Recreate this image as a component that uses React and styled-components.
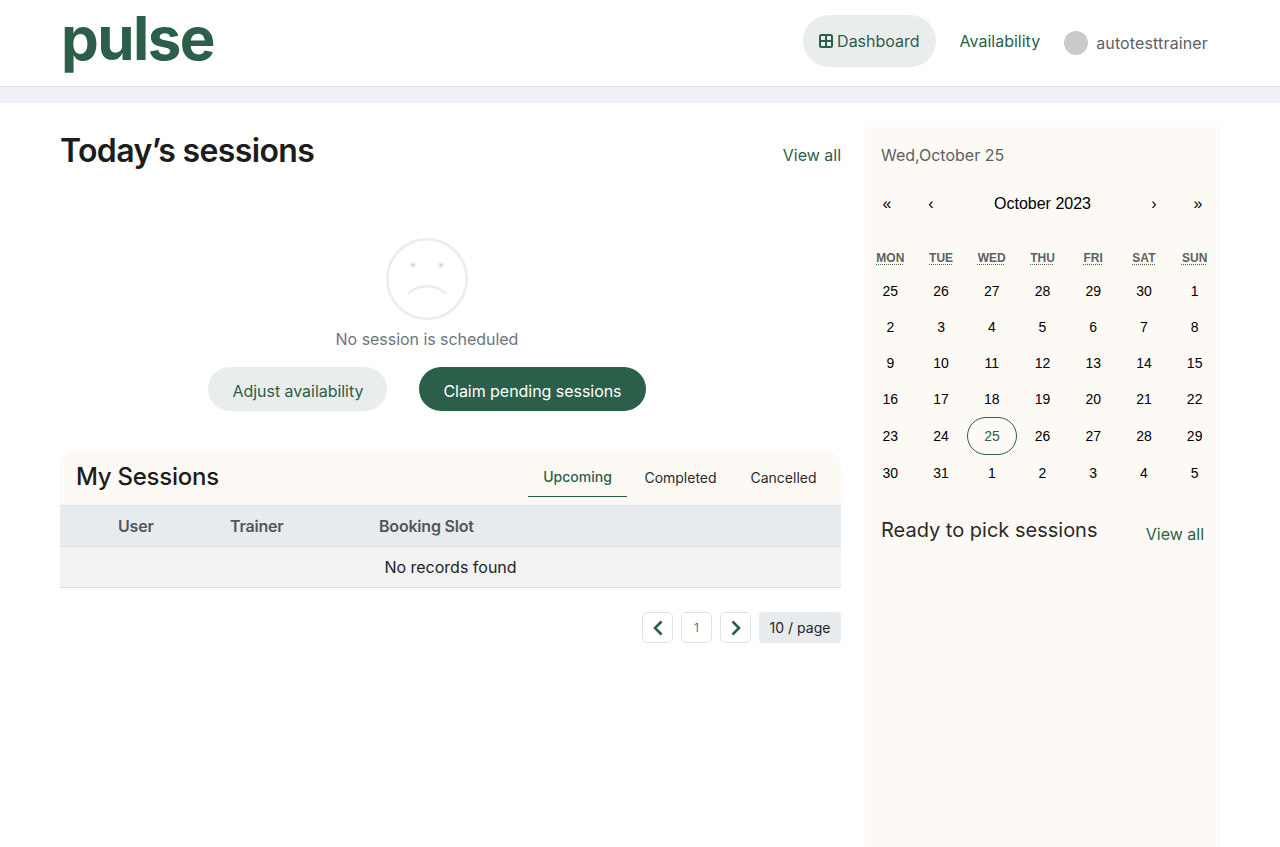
import React from 'react';
import styled, { createGlobalStyle } from 'styled-components';

const GREEN = '#2b5f4a';
const CREAM = '#fdfaf6';

const GlobalStyle = createGlobalStyle`
  html, body {
    margin: 0;
    padding: 0;
    background: #fff;
    font-family: Inter, "Liberation Sans", sans-serif;
  }
  * {
    box-sizing: border-box;
  }
`;

const Page = styled.div`
  width: 1280px;
  height: 847px;
  overflow: hidden;
`;

const Header = styled.header`
  height: 87px;
  border-bottom: 1px solid #dee0e6;
  display: flex;
  align-items: center;
  justify-content: space-between;
  padding: 0 72px 0 61px;
`;

const Logo = styled.span`
  font-family: Inter, sans-serif;
  font-weight: 700;
  font-size: 60px;
  line-height: 86px;
  letter-spacing: -1.6px;
  color: ${GREEN};
  margin-top: -10px;
`;

const Nav = styled.nav`
  display: flex;
  align-items: center;
`;

const NavLink = styled.a`
  display: flex;
  align-items: center;
  gap: 4px;
  height: 52px;
  margin-top: -5px;
  margin-right: 8px;
  padding: 0 16px;
  border-radius: 26px;
  font-size: 16px;
  color: ${GREEN};
  background: ${(p) => (p.$active ? '#e9eeec' : 'transparent')};
`;

const UserBox = styled.div`
  display: flex;
  align-items: center;
  gap: 8px;
  font-size: 16px;
  letter-spacing: 0.14px;
  color: #5f5f5f;
`;

const Avatar = styled.span`
  width: 24px;
  height: 24px;
  border-radius: 50%;
  background: #cbcbcb;
`;

const Band = styled.div`
  height: 16px;
  background: #f0f1f5;
`;

const Main = styled.main`
  display: flex;
  gap: 24px;
  padding: 24px 60px 0;
`;

const Left = styled.section`
  width: 781px;
`;

const TitleRow = styled.div`
  display: flex;
  justify-content: space-between;
  align-items: flex-start;
`;

const Title = styled.h1`
  margin: 0;
  font-size: 32px;
  line-height: 48px;
  font-weight: 600;
  letter-spacing: -0.62px;
  color: #1c1c1c;
`;

const ViewAll = styled.a`
  font-size: 16px;
  line-height: 24px;
  color: ${GREEN};
  margin-top: ${(p) => p.$top || 0}px;
`;

const Empty = styled.div`
  display: flex;
  flex-direction: column;
  align-items: center;
  margin-top: 63px;
  padding-right: 47px;
  letter-spacing: -0.04px;
`;

const EmptyText = styled.p`
  margin: 7px 0 0;
  font-size: 16px;
  line-height: 24px;
  color: #6c757d;
`;

const Actions = styled.div`
  display: flex;
  gap: 32px;
  margin-top: 16px;
`;

const Pill = styled.button`
  height: 44px;
  padding: 4px 24px 0;
  border: 0;
  border-radius: 22px;
  font-family: inherit;
  font-size: 16px;
  letter-spacing: inherit;
  color: ${(p) => (p.$primary ? '#fff' : GREEN)};
  background: ${(p) => (p.$primary ? GREEN : '#e9eeec')};
`;

const SessionsHead = styled.div`
  margin-top: 40px;
  height: 54px;
  padding: 0 8px 8px 16px;
  display: flex;
  justify-content: space-between;
  align-items: flex-start;
  background: ${CREAM};
  border-radius: 16px 16px 0 0;
`;

const SessionsTitle = styled.h2`
  margin: 0;
  padding-top: 8px;
  font-size: 24px;
  line-height: 36px;
  font-weight: 500;
  letter-spacing: -0.25px;
  color: #1c1c1c;
`;

const Tabs = styled.div`
  display: flex;
  height: 46px;
`;

const TabItem = styled.a`
  display: flex;
  align-items: center;
  justify-content: center;
  width: ${(p) => p.$w}px;
  font-size: 14px;
  font-weight: ${(p) => (p.$active ? 500 : 400)};
  color: ${(p) => (p.$active ? GREEN : '#2a2a2a')};
  border-bottom: 1px solid ${(p) => (p.$active ? GREEN : 'transparent')};
  padding-top: ${(p) => (p.$active ? '6px' : '8px')};
`;

const Table = styled.table`
  width: 100%;
  border-collapse: collapse;
  table-layout: fixed;
`;

const Th = styled.th`
  width: ${(p) => p.$w}px;
  height: 41px;
  padding: 0 0 0 ${(p) => p.$pl || 0}px;
  text-align: left;
  font-size: 16px;
  font-weight: 600;
  letter-spacing: -0.2px;
  color: #52565b;
  background: #e8ebee;
  border-top: 1px solid #dee2e6;
  border-bottom: 1px solid #dee2e6;
`;

const Td = styled.td`
  height: 41px;
  padding: 0;
  text-align: center;
  font-size: 16px;
  color: #212529;
  background: #f2f2f2;
  border-bottom: 1px solid #dee2e6;
`;

const Pager = styled.div`
  display: flex;
  justify-content: flex-end;
  gap: 8px;
  margin-top: 24px;
`;

const PageButton = styled.button`
  width: 31px;
  height: 31px;
  padding: 0;
  display: flex;
  align-items: center;
  justify-content: center;
  background: #fff;
  border: 1px solid #dee2e6;
  border-radius: 5px;
  font-family: inherit;
  font-size: 12px;
  color: #6c757d;
`;

const PageSize = styled.div`
  width: 82px;
  height: 31px;
  display: flex;
  align-items: center;
  justify-content: center;
  background: #e8ebee;
  border-radius: 4px;
  font-size: 14px;
  color: #212529;
`;

const Side = styled.aside`
  width: 355px;
  height: 720px;
  background: ${CREAM};
`;

const DateLabel = styled.div`
  padding: 16px 16px 0;
  font-size: 16px;
  line-height: 24px;
  color: #5f5f5f;
`;

const CalNav = styled.div`
  display: flex;
  align-items: center;
  height: 44px;
  margin-top: 15px;
  margin-bottom: 19px;
  font-family: "Liberation Sans", sans-serif;
  font-size: 16px;
  color: #000;
`;

const CalArrow = styled.span`
  width: 44px;
  text-align: center;
`;

const CalLabel = styled.span`
  flex: 1;
  text-align: center;
`;

const Week = styled.div`
  display: grid;
  grid-template-columns: repeat(7, 1fr);
  height: ${(p) => p.$h || 36}px;
`;

const WeekDay = styled.div`
  display: flex;
  align-items: center;
  justify-content: center;
  height: 26px;
  font-family: "Liberation Sans", sans-serif;
  font-size: 12px;
  font-weight: 700;
  color: #5f5f5f;
  text-decoration: underline dotted;
  text-underline-offset: 2px;
`;

const Day = styled.div`
  display: flex;
  align-items: center;
  justify-content: center;
  font-family: "Liberation Sans", sans-serif;
  font-size: 14px;
  color: ${(p) => (p.$selected ? GREEN : '#000')};
  border: ${(p) => (p.$selected ? `1px solid ${GREEN}` : '0')};
  margin-left: ${(p) => (p.$selected ? '0.6px' : '0')};
  border-radius: 19px;
`;

const ReadyRow = styled.div`
  display: flex;
  justify-content: space-between;
  align-items: flex-start;
  padding: 0 16px;
  margin-top: 24px;
`;

const ReadyTitle = styled.h3`
  margin: 0;
  font-size: 20px;
  line-height: 30px;
  font-weight: 400;
  color: #2a2a2a;
`;

const GridIcon = () => (
  <svg width="14" height="14" viewBox="0 0 14 14" fill="none" stroke={GREEN} strokeWidth="2">
    <rect x="1" y="1" width="12" height="12" rx="1.5" />
    <path d="M7 1v12M1 7h12" />
  </svg>
);

const SadFace = () => (
  <svg width="82" height="82" viewBox="0 0 82 82" fill="none">
    <circle cx="41" cy="41" r="39.7" stroke="#e9eeec" strokeWidth="2.6" />
    <circle cx="27" cy="27" r="3" fill="#e9eeec" />
    <circle cx="55" cy="27" r="3" fill="#e9eeec" />
    <circle cx="27" cy="27" r="0.8" fill="#a9adab" />
    <circle cx="55" cy="27" r="0.8" fill="#a9adab" />
    <path d="M23 55c10-9 26-9 36 0" stroke="#e9eeec" strokeWidth="2.6" strokeLinecap="round" />
  </svg>
);

const Chevron = ({ dir }) => (
  <svg width="12" height="16" viewBox="0 0 12 16" fill="none" stroke={GREEN} strokeWidth="2.6">
    <path d={dir === 'left' ? 'M9.5 1.5L3 8l6.5 6.5' : 'M2.5 1.5L9 8l-6.5 6.5'} />
  </svg>
);

const weekDays = ['MON', 'TUE', 'WED', 'THU', 'FRI', 'SAT', 'SUN'];

const weeks = [
  [25, 26, 27, 28, 29, 30, 1],
  [2, 3, 4, 5, 6, 7, 8],
  [9, 10, 11, 12, 13, 14, 15],
  [16, 17, 18, 19, 20, 21, 22],
  [23, 24, 25, 26, 27, 28, 29],
  [30, 31, 1, 2, 3, 4, 5],
];

const App = () => (
  <Page>
    <GlobalStyle />
    <Header>
      <Logo>pulse</Logo>
      <Nav>
        <NavLink $active>
          <GridIcon />
          Dashboard
        </NavLink>
        <NavLink>Availability</NavLink>
        <UserBox>
          <Avatar />
          autotesttrainer
        </UserBox>
      </Nav>
    </Header>
    <Band />
    <Main>
      <Left>
        <TitleRow>
          <Title>Today’s sessions</Title>
          <ViewAll $top={16}>View all</ViewAll>
        </TitleRow>
        <Empty>
          <SadFace />
          <EmptyText>No session is scheduled</EmptyText>
          <Actions>
            <Pill>Adjust availability</Pill>
            <Pill $primary>Claim pending sessions</Pill>
          </Actions>
        </Empty>
        <SessionsHead>
          <SessionsTitle>My Sessions</SessionsTitle>
          <Tabs>
            <TabItem $active $w={99}>Upcoming</TabItem>
            <TabItem $w={107}>Completed</TabItem>
            <TabItem $w={99}>Cancelled</TabItem>
          </Tabs>
        </SessionsHead>
        <Table>
          <thead>
            <tr>
              <Th $w={170} $pl={58}>User</Th>
              <Th $w={149}>Trainer</Th>
              <Th>Booking Slot</Th>
            </tr>
          </thead>
          <tbody>
            <tr>
              <Td colSpan={3}>No records found</Td>
            </tr>
          </tbody>
        </Table>
        <Pager>
          <PageButton><Chevron dir="left" /></PageButton>
          <PageButton>1</PageButton>
          <PageButton><Chevron dir="right" /></PageButton>
          <PageSize>10 / page</PageSize>
        </Pager>
      </Left>
      <Side>
        <DateLabel>Wed,October 25</DateLabel>
        <CalNav>
          <CalArrow>«</CalArrow>
          <CalArrow>‹</CalArrow>
          <CalLabel>October 2023</CalLabel>
          <CalArrow>›</CalArrow>
          <CalArrow>»</CalArrow>
        </CalNav>
        <Week $h={28}>
          {weekDays.map((d) => <WeekDay key={d}>{d}</WeekDay>)}
        </Week>
        {weeks.map((week, i) => (
          <Week key={i} $h={i === 4 ? 38 : 36}>
            {week.map((d, j) => (
              <Day key={j} $selected={i === 4 && d === 25}>{d}</Day>
            ))}
          </Week>
        ))}
        <ReadyRow>
          <ReadyTitle>Ready to pick sessions</ReadyTitle>
          <ViewAll $top={7}>View all</ViewAll>
        </ReadyRow>
      </Side>
    </Main>
  </Page>
);

export default App;
